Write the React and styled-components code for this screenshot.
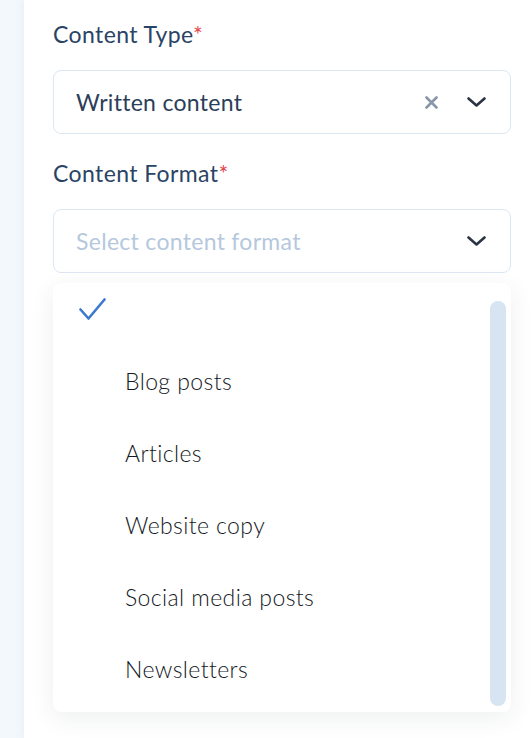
import styled, { createGlobalStyle } from 'styled-components';

const GlobalStyle = createGlobalStyle`
  body {
    margin: 0;
    background: #ffffff;
    font-family: 'Lato', 'Open Sans', sans-serif;
  }
`;

const Page = styled.div`
  display: flex;
  min-height: 738px;
`;

const Side = styled.div`
  width: 24px;
  flex-shrink: 0;
  background: #f3f8fd;
`;

const Main = styled.div`
  flex: 1;
  padding: 20px 21px 0 29px;
  background: #ffffff;
  box-shadow: -2px 0 8px rgba(120, 140, 170, 0.08);
`;

const Label = styled.div`
  font-size: 23px;
  line-height: 28px;
  font-weight: 400;
  letter-spacing: 0.4px;
  color: #2a4465;
  margin-bottom: 22px;
  span {
    color: #e5484d;
  }
`;

const Field = styled.div`
  display: flex;
  align-items: center;
  height: 64px;
  box-sizing: border-box;
  border: 1px solid #dce7f2;
  border-radius: 8px;
  padding: 0 24px 0 22px;
  margin-bottom: ${(p) => p.$gap || 0}px;
`;

const Value = styled.div`
  flex: 1;
  font-size: 23px;
  letter-spacing: 0.3px;
  color: ${(p) => (p.$placeholder ? '#b5c8dd' : '#2c3e5a')};
  font-weight: 400;
`;

const Clear = styled.div`
  display: flex;
  margin-right: 29px;
`;

const Chevron = styled.div`
  display: flex;
`;

const Menu = styled.div`
  position: relative;
  margin-top: 10px;
  height: 429px;
  border-radius: 8px;
  background: #ffffff;
  box-shadow: 0 6px 24px rgba(40, 50, 70, 0.08);
  overflow: hidden;
`;

const Option = styled.div`
  display: flex;
  align-items: ${(p) => (p.$check ? 'flex-start' : 'center')};
  height: ${(p) => (p.$check ? 62 : 72)}px;
  padding: ${(p) => (p.$check ? '15px 0 0 26px' : '0 0 0 72px')};
  box-sizing: border-box;
  font-size: 23px;
  letter-spacing: 0.4px;
  font-weight: 300;
  color: #141824;
`;

const Thumb = styled.div`
  position: absolute;
  top: 18px;
  bottom: 6px;
  right: 5px;
  width: 16px;
  border-radius: 8px;
  background: #d7e4f1;
`;

const formats = ['Blog posts', 'Articles', 'Website copy', 'Social media posts', 'Newsletters'];

const ChevronIcon = () => (
  <svg width="19" height="10" viewBox="0 0 19 10">
    <path d="M1.5 1.5 L9.5 8.5 L17.5 1.5" fill="none" stroke="#2b3445" strokeWidth="2.6" strokeLinecap="round" strokeLinejoin="round" />
  </svg>
);

const App = () => {
  return (
    <>
      <GlobalStyle />
      <Page>
        <Side />
        <Main>
          <Label>
            Content Type<span>*</span>
          </Label>
          <Field $gap={25}>
            <Value>Written content</Value>
            <Clear>
              <svg width="13" height="13" viewBox="0 0 13 13">
                <path d="M1.5 1.5 L11.5 11.5 M11.5 1.5 L1.5 11.5" stroke="#8796a8" strokeWidth="2.6" strokeLinecap="round" />
              </svg>
            </Clear>
            <Chevron>
              <ChevronIcon />
            </Chevron>
          </Field>
          <Label>
            Content Format<span>*</span>
          </Label>
          <Field>
            <Value $placeholder>Select content format</Value>
            <Chevron>
              <ChevronIcon />
            </Chevron>
          </Field>
          <Menu>
            <Option $check>
              <svg width="27" height="23" viewBox="0 0 27 23">
                <path d="M1.5 11.5 L9.5 20.5 L25.5 1.5" fill="none" stroke="#3c79cf" strokeWidth="2.6" strokeLinecap="round" strokeLinejoin="round" />
              </svg>
            </Option>
            {formats.map((f) => (
              <Option key={f}>{f}</Option>
            ))}
            <Thumb />
          </Menu>
        </Main>
      </Page>
    </>
  );
};

export default App;
